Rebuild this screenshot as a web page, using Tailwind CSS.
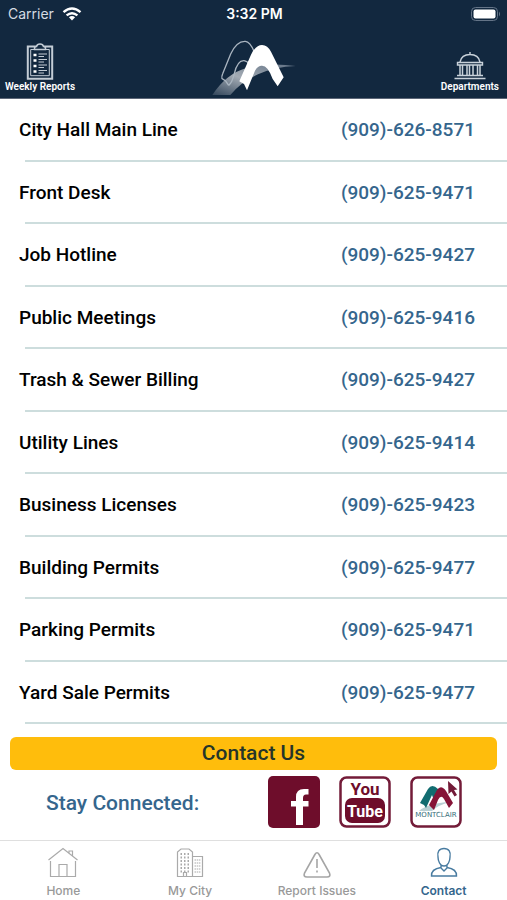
<!DOCTYPE html>
<html lang="en">
<head>
<meta charset="utf-8">
<meta name="viewport" content="width=device-width, initial-scale=1">
<title>Montclair Contacts</title>
<script src="https://cdn.jsdelivr.net/npm/@tailwindcss/browser@4"></script>
</head>
<body class="flex min-h-screen flex-col bg-white font-['Roboto',sans-serif] text-black">

<header class="border-b border-[#5c6677] bg-[#12283f] text-white">
  <div class="grid h-7 grid-cols-3 items-center pr-1.5 pl-2 font-['Inter',sans-serif] text-sm">
    <div class="flex items-center gap-2 text-[#d5dbe2]">
      <span>Carrier</span>
      <svg class="h-4 w-5" viewBox="0 0 20 16" fill="none" stroke="#fff" aria-label="Wi-Fi">
        <path d="M1.500 6.200Q10-1.200 18.500 6.200M4.600 9.400Q10 5 15.400 9.400" stroke-width="2.400"/>
        <path d="M10 14.500L6.900 11.300Q10 8.900 13.100 11.300Z" fill="#fff" stroke="none"/>
      </svg>
    </div>
    <time class="text-center font-semibold">3:32 PM</time>
    <svg class="h-4 w-8 justify-self-end" viewBox="0 0 32 16" aria-label="Battery full">
      <rect x="2.500" y="1.500" width="26" height="13" rx="4" fill="none" stroke="#647487"/>
      <rect x="4.500" y="3.500" width="22" height="9" rx="2" fill="#fff"/>
      <path d="M30 5.500Q32 8 30 10.500Z" fill="#647487"/>
    </svg>
  </div>
  <div class="grid grid-cols-3 items-end pt-2.5">
    <button type="button" class="flex w-20 flex-col items-center gap-px pb-[5px] text-[10px] leading-3 font-semibold whitespace-nowrap">
      <svg class="h-[37px] w-[28px]" viewBox="0 0 28 37" fill="none" stroke="#c3ccd5">
        <path d="M10 3.500H1.800V35.700H26.200V3.500H18" stroke-width="2"/>
        <path d="M9 6.500H4.700V32.700H23.300V6.500H19" stroke-width="1"/>
        <path d="M8.500 6.500V4.500Q8.500 3.500 10.500 3.500Q11 1 14 1Q17 1 17.500 3.500Q19.500 3.500 19.500 4.500V6.500Z" stroke-width="1.500"/>
        <path d="M12.500 11H21M12.500 13.500H18M12.500 16.500H21M12.500 19H18M12.500 22H21M12.500 24.500H18M12.500 27.500H21M12.500 30H18" stroke-width="1.200"/>
        <path d="M7.500 12H10.500M7.500 17.500H10.500M7.500 23H10.500M7.500 28.500H10.500" stroke="#fff" stroke-width="2.600"/>
      </svg>
      Weekly Reports
    </button>
    <svg class="h-[60px] w-[90px] justify-self-center" viewBox="28 113 270 180" aria-label="City of Montclair">
      <defs><linearGradient id="swoosh" x1="0" y1="1" x2="1" y2="0"><stop stop-color="#33465b"/><stop offset=".45" stop-color="#a3abb4"/><stop offset="1" stop-color="#5f7083"/></linearGradient></defs>
      <path d="M38 284Q80 220 140 203Q210 185 288 197Q225 199 175 222Q125 244 92 284Z" fill="url(#swoosh)"/>
      <path d="M87 255L78 242L67 235Q65 229 69 220L93 161C103 139 116 122 137 123Q151 124 163 153M87 255Q97 248 104 220Q113 180 133 181Q143 182 149 193" fill="none" stroke="#aab5c0" stroke-width="4"/>
      <path d="M119 243L154 163Q168 134 187 134Q204 135 214 154L252 231L234 258L219 236Q205 196 187 196Q174 196 166 211L142 270L133 251Z" fill="#fff"/>
    </svg>
    <button type="button" class="flex flex-col items-center gap-px justify-self-end pr-2 pb-[5px] text-[10px] leading-3 font-semibold">
      <svg class="h-[29px] w-[34px]" viewBox="0 0 34 29" fill="none" stroke="#c9d2da" stroke-width="1.400">
        <path d="M17 1V4M7 11Q8.500 3.500 17 3.500Q25.500 3.500 27 11M4.500 11.500H29.500V14H4.500ZM4 24.500H30M1.500 27.500H32.500"/>
        <path d="M7 14V24M9.500 14V24M14 14V24M16.500 14V24M20 14V24M24.500 14V24M27 14V24" stroke-width="1.500"/>
      </svg>
      Departments
    </button>
  </div>
</header>

<main class="flex flex-1 flex-col">
  <ul class="flex flex-1 flex-col text-[19px] leading-6 font-medium [&>li]:relative [&>li]:flex [&>li]:flex-1 [&>li]:items-center [&>li]:justify-between [&>li]:pr-8 [&>li]:pl-[19px] [&>li]:after:absolute [&>li]:after:right-0 [&>li]:after:bottom-0 [&>li]:after:left-[25px] [&>li]:after:border-b-2 [&>li]:after:border-[#cddddd] [&_a]:text-[#35668d]">
    <li><span>City Hall Main Line</span><a href="tel:9096268571">(909)-626-8571</a></li>
    <li><span>Front Desk</span><a href="tel:9096259471">(909)-625-9471</a></li>
    <li><span>Job Hotline</span><a href="tel:9096259427">(909)-625-9427</a></li>
    <li><span>Public Meetings</span><a href="tel:9096259416">(909)-625-9416</a></li>
    <li><span>Trash &amp; Sewer Billing</span><a href="tel:9096259427">(909)-625-9427</a></li>
    <li><span>Utility Lines</span><a href="tel:9096259414">(909)-625-9414</a></li>
    <li><span>Business Licenses</span><a href="tel:9096259423">(909)-625-9423</a></li>
    <li><span>Building Permits</span><a href="tel:9096259477">(909)-625-9477</a></li>
    <li><span>Parking Permits</span><a href="tel:9096259471">(909)-625-9471</a></li>
    <li><span>Yard Sale Permits</span><a href="tel:9096259477">(909)-625-9477</a></li>
  </ul>
  <div class="px-[10px] pt-[13px]">
    <button type="button" class="h-[33px] w-full rounded-md bg-[#ffbd0c] text-[21px] font-medium text-[#253529]">Contact Us</button>
  </div>
  <div class="flex items-center justify-between pt-[6px] pr-[45px] pb-3 pl-[46px]">
    <h2 class="pt-1 text-[21px] font-medium text-[#35668d]">Stay Connected:</h2>
    <div class="flex gap-[19px]">
      <a href="#facebook" aria-label="Facebook">
        <svg class="size-[52px]" viewBox="0 0 52 52"><rect width="52" height="52" rx="5" fill="#6e0d2b"/><path d="M28 49V30.500H23V25H28V21Q28 13 36 13H40.500V18.500H38Q35 18.500 35 22V25H40.500V30.500H35V49Z" fill="#fff"/></svg>
      </a>
      <a href="#youtube" aria-label="YouTube">
        <svg class="size-[52px]" viewBox="0 0 52 52" font-family="Roboto, sans-serif" font-weight="700" text-anchor="middle"><rect x="1.500" y="1.500" width="49" height="49" rx="6" fill="#fff" stroke="#731b38" stroke-width="2.500"/><text x="26" y="18.500" font-size="17" fill="#6e0d2b">You</text><rect x="6" y="22" width="40" height="25" rx="7" fill="#6e0d2b"/><text x="26" y="40.500" font-size="16" fill="#fff">Tube</text></svg>
      </a>
      <a href="#montclair" aria-label="City of Montclair website">
        <svg class="size-[52px]" viewBox="0 0 52 52"><rect x="1.500" y="1.500" width="49" height="49" rx="6" fill="#fff" stroke="#731b38" stroke-width="2.500"/>
          <path d="M9 35Q18 27 40 26Q28 29 22 35Z" fill="#b9cfd3"/>
          <path d="M10 27L18 13Q22 7 28 13L30 17L25 27L22 19L16 32L14 29Z" fill="#126c70"/>
          <path d="M19 29L27 14Q31 8 36 15L43 27L39 32L34 23Q31 18 28 24L24 34Z" fill="#861437"/>
          <path d="M38 5L47.500 13.500L44 14L47 19L44.500 20.500L41.500 15.500L38.500 18Z" fill="#731b38"/>
          <text x="26" y="40.500" font-family="'DejaVu Sans', sans-serif" font-size="7" text-anchor="middle" fill="#366d79">MONTCLAIR</text></svg>
      </a>
    </div>
  </div>
</main>

<nav class="grid h-[60px] grid-cols-4 border-t border-[#dfdfdf] pt-[6px] font-['Inter',sans-serif] text-[12px] leading-4 font-medium text-[#999]">
  <a href="#home" class="flex flex-col items-center gap-1">
    <svg class="size-8" viewBox="0 0 32 32" fill="none" stroke="#aaa" stroke-width="1.200"><path d="M3.500 14V29.500H28.500V14M1.500 13L16 1.500L30.500 13M22 6V4H25.500V9M12 29.500V17.500H20V29.500"/></svg>
    Home
  </a>
  <a href="#city" class="flex flex-col items-center gap-1">
    <svg class="size-8" viewBox="0 0 32 32" fill="none" stroke="#aaa" stroke-width="1.200"><path d="M3.500 29.500V5L7 2H15L18.500 5V29.500ZM18.500 9.500H28.500V29.500H18.500M9.500 29.500V25.500H12.500V29.500"/><path d="M6.500 7H16M6.500 10.500H16M6.500 14H16M6.500 17.500H16M6.500 21H16M6.500 24.500H16" stroke-width="2" stroke-dasharray="1.500 2"/><path d="M20.500 13H26.500M20.500 16H26.500M20.500 19H26.500M20.500 22H26.500M20.500 25H26.500" stroke-dasharray="1.500 .7"/></svg>
    My City
  </a>
  <a href="#issues" class="flex flex-col items-center gap-1">
    <svg class="size-8" viewBox="0 0 32 32" fill="none" stroke="#a5a5a5" stroke-width="1.600"><path d="M13.900 7.500Q16 4 18.100 7.500L28.500 26Q30 30 26 30H6Q2 30 3.500 26ZM16 12V21M16 23.500V25.500"/></svg>
    <span class="whitespace-nowrap">Report Issues</span>
  </a>
  <a href="#contact" aria-current="page" class="flex flex-col items-center gap-1 font-semibold text-[#35668d]">
    <svg class="size-8" viewBox="0 0 32 32" fill="none" stroke="#487ba0" stroke-width="1.400"><path d="M16 1.500C11 1.500 9 5 10 10C10 14 12 19 16 19S22 14 22 10C23 5 21 1.500 16 1.500ZM13 18V21L16 24L19 21V18M13 20.500Q3 22 3.500 29H28.500Q29 22 19 20.500"/></svg>
    Contact
  </a>
</nav>
</body>
</html>
